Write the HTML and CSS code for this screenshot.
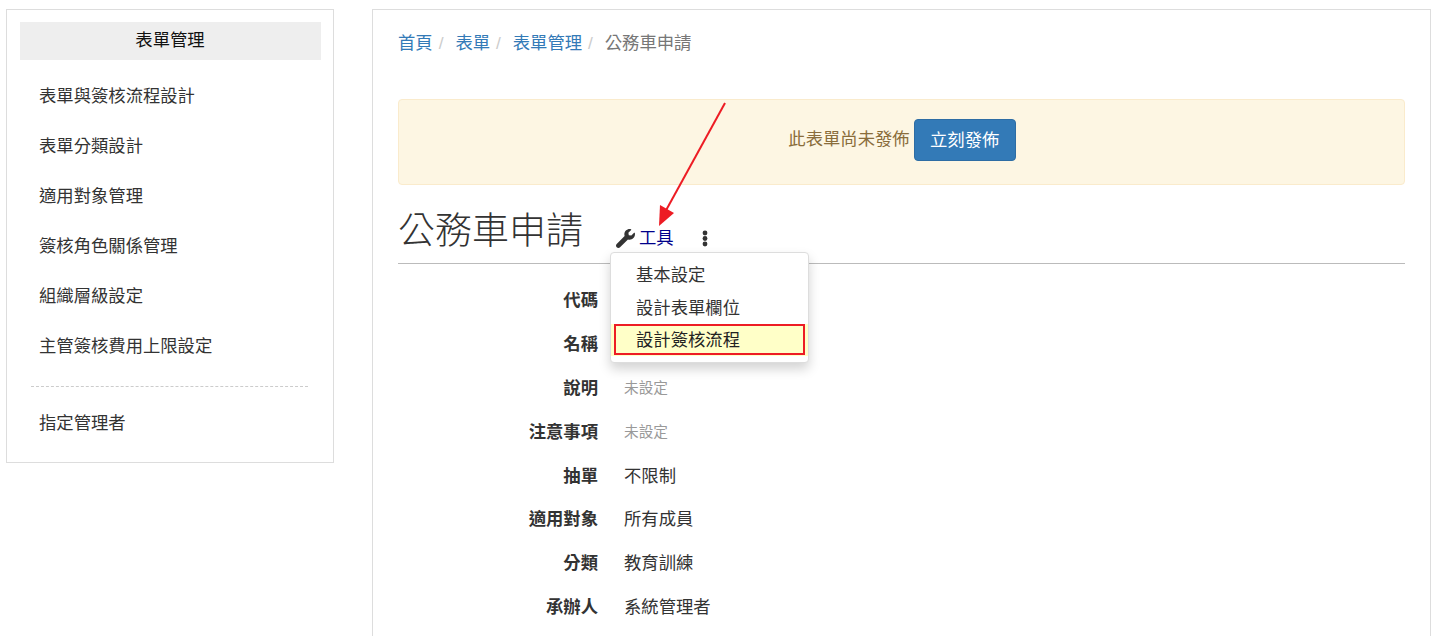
FILE: index.html
```html
<!DOCTYPE html>
<html lang="zh-Hant">
<head>
<meta charset="utf-8">
<title>公務車申請</title>
<link rel="stylesheet" href="styles.css">
</head>
<body>
<aside class="side">
  <h2 class="side-head">表單管理</h2>
  <ul class="side-list">
    <li>表單與簽核流程設計</li>
    <li>表單分類設計</li>
    <li>適用對象管理</li>
    <li>簽核角色關係管理</li>
    <li>組織層級設定</li>
    <li>主管簽核費用上限設定</li>
  </ul>
  <div class="side-sep"></div>
  <ul class="side-list side-list-last">
    <li>指定管理者</li>
  </ul>
</aside>
<main class="main">
  <nav class="crumbs">
    <a>首頁</a><span class="slash">/</span>
    <a>表單</a><span class="slash">/</span>
    <a>表單管理</a><span class="slash">/</span>
    <span class="current">公務車申請</span>
  </nav>
  <div class="alert">
    <span class="alert-text">此表單尚未發佈</span>
    <button class="btn">立刻發佈</button>
  </div>
  <header class="title-row">
    <h1>公務車申請</h1>
    <div class="tools">
      <svg class="wrench" viewBox="0 0 512 512"><path d="M507.700 109.100c-2.200-9-13.500-12.100-20.100-5.500l-74.400 74.400-67.900-11.300-11.300-67.900 74.400-74.400c6.600-6.600 3.400-17.900-5.700-20.200-47.400-11.700-99.500 1-136.400 37.900-39.500 39.500-50.900 96.500-34.200 146.400L18.700 402.400c-25 25-25 65.500 0 90.500 25 25 65.500 25 90.500 0l213.200-213.200c50 16.700 106.900 5.200 146.500-34.400 37-37 49.600-89.200 38.800-136.200z"/></svg>
      <a class="tools-link">工具</a>
      <svg class="kebab" viewBox="0 0 6 16"><circle cx="3" cy="2.500" r="2.400"/><circle cx="3" cy="8" r="2.400"/><circle cx="3" cy="13.500" r="2.400"/></svg>
      <div class="menu">
        <div class="menu-item">基本設定</div>
        <div class="menu-item">設計表單欄位</div>
        <div class="menu-item menu-item-hot"><span class="hot-frame"></span>設計簽核流程</div>
      </div>
    </div>
  </header>
  <dl class="fields">
    <dt>代碼</dt><dd></dd>
    <dt>名稱</dt><dd></dd>
    <dt>說明</dt><dd class="unset">未設定</dd>
    <dt>注意事項</dt><dd class="unset">未設定</dd>
    <dt>抽單</dt><dd>不限制</dd>
    <dt>適用對象</dt><dd>所有成員</dd>
    <dt>分類</dt><dd>教育訓練</dd>
    <dt>承辦人</dt><dd>系統管理者</dd>
  </dl>
</main>
<svg class="arrow" viewBox="0 0 100 140" width="100" height="140"><line x1="84" y1="4" x2="23" y2="115"/><polygon points="18,127 19,106 33,114"/></svg>
</body>
</html>
```
FILE: styles.css
```css
html, body {
  margin: 0;
  height: 636px;
  overflow: hidden;
  background: #fff;
}
body {
  position: relative;
  display: flex;
  align-items: flex-start;
  padding: 9px 0 0 6px;
  box-sizing: border-box;
  font-family: "Noto Sans CJK TC", "Liberation Sans", sans-serif;
  font-size: 17.33px;
  color: #333;
}
.side {
  width: 328px;
  height: 454px;
  box-sizing: border-box;
  border: 1px solid #ddd;
  padding: 12px 12px 12px 13px;
  flex: none;
}
.side-head {
  margin: 0 0 10px;
  height: 38px;
  padding-right: 1px;
  box-sizing: border-box;
  background: #eee;
  text-align: center;
  font-size: 17.33px;
  font-weight: 400;
  line-height: 34px;
  color: #111;
}
.side-list {
  list-style: none;
  margin: 0;
  padding: 0 0 0 19px;
}
.side-list li {
  height: 50px;
  line-height: 50px;
  white-space: nowrap;
}
.side-sep {
  margin: 16px 13px 10px 11px;
  border-top: 1px dashed #ccc;
}
.main {
  width: 1059px;
  height: 627px;
  margin-left: 38px;
  box-sizing: border-box;
  border: 1px solid #ddd;
  border-bottom: 0;
  padding: 0 25px;
  flex: none;
}
.crumbs {
  height: 89px;
  padding: 15px 0 0;
  box-sizing: border-box;
  line-height: 34px;
  white-space: nowrap;
}
.crumbs a {
  color: #337ab7;
}
.slash {
  color: #ccc;
  font-family: "Liberation Sans", sans-serif;
  margin: 0 8px 0 6px;
}
.crumbs .current {
  color: #777;
}
.alert {
  height: 86px;
  box-sizing: border-box;
  background: #fdf6e3;
  border: 1px solid #faebcc;
  border-radius: 4px;
  padding: 0 0 4px 1px;
  display: flex;
  align-items: center;
  justify-content: center;
  gap: 4px;
  color: #8a6d3b;
}
.alert-text {
  padding-bottom: 6px;
}
.btn {
  width: 102px;
  height: 42px;
  padding: 0 0 4px;
  background: #337ab7;
  border: 1px solid #2e6da4;
  border-radius: 4px;
  color: #fff;
  font: inherit;
}
.title-row {
  height: 79px;
  border-bottom: 1px solid #bbb;
  display: flex;
  box-sizing: border-box;
}
.title-row h1 {
  margin: 21px 0 0;
  font-size: 37px;
  line-height: 44px;
  font-weight: 300;
  width: 217px;
  flex: none;
}
.tools {
  position: relative;
  display: flex;
  align-items: flex-start;
  height: 40px;
  padding-top: 43px;
  box-sizing: border-box;
}
.wrench {
  width: 19px;
  height: 19px;
  margin: 1px 0 0 1px;
  flex: none;
  fill: #333;
}
.tools-link {
  margin-left: 4px;
  margin-top: -1px;
  line-height: 20px;
  color: #00008b;
}
.kebab {
  width: 6px;
  height: 17px;
  margin: 2px 0 0 28px;
  fill: #333;
}
.menu {
  position: absolute;
  left: -5px;
  top: 67px;
  width: 199px;
  height: 111px;
  box-sizing: border-box;
  background: #fff;
  border: 1px solid #ddd;
  border-radius: 4px;
  box-shadow: 0 6px 12px rgba(0, 0, 0, .175);
  padding-top: 5px;
}
.menu-item {
  position: relative;
  height: 33px;
  line-height: 31px;
  padding-left: 25px;
  white-space: nowrap;
}
.menu-item-hot {
  height: 32px;
  line-height: 29px;
  background: #ffffc8;
  color: #222;
}
.hot-frame {
  position: absolute;
  left: 3px;
  right: 3px;
  top: 0;
  bottom: 1px;
  border: 2px solid #ed1c24;
}
.fields {
  margin: 13px 0 0;
  display: grid;
  grid-template-columns: 200px 1fr;
  column-gap: 26px;
  grid-auto-rows: 43.800px;
  align-items: center;
}
.fields dt {
  text-align: right;
  font-weight: 700;
  white-space: nowrap;
}
.fields dd {
  margin: 0;
  white-space: nowrap;
}
.fields .unset {
  font-size: 14.67px;
  color: #999;
}
.arrow {
  position: absolute;
  left: 641px;
  top: 99px;
}
.arrow line {
  stroke: #ed1c24;
  stroke-width: 2;
}
.arrow polygon {
  fill: #ed1c24;
}
```
